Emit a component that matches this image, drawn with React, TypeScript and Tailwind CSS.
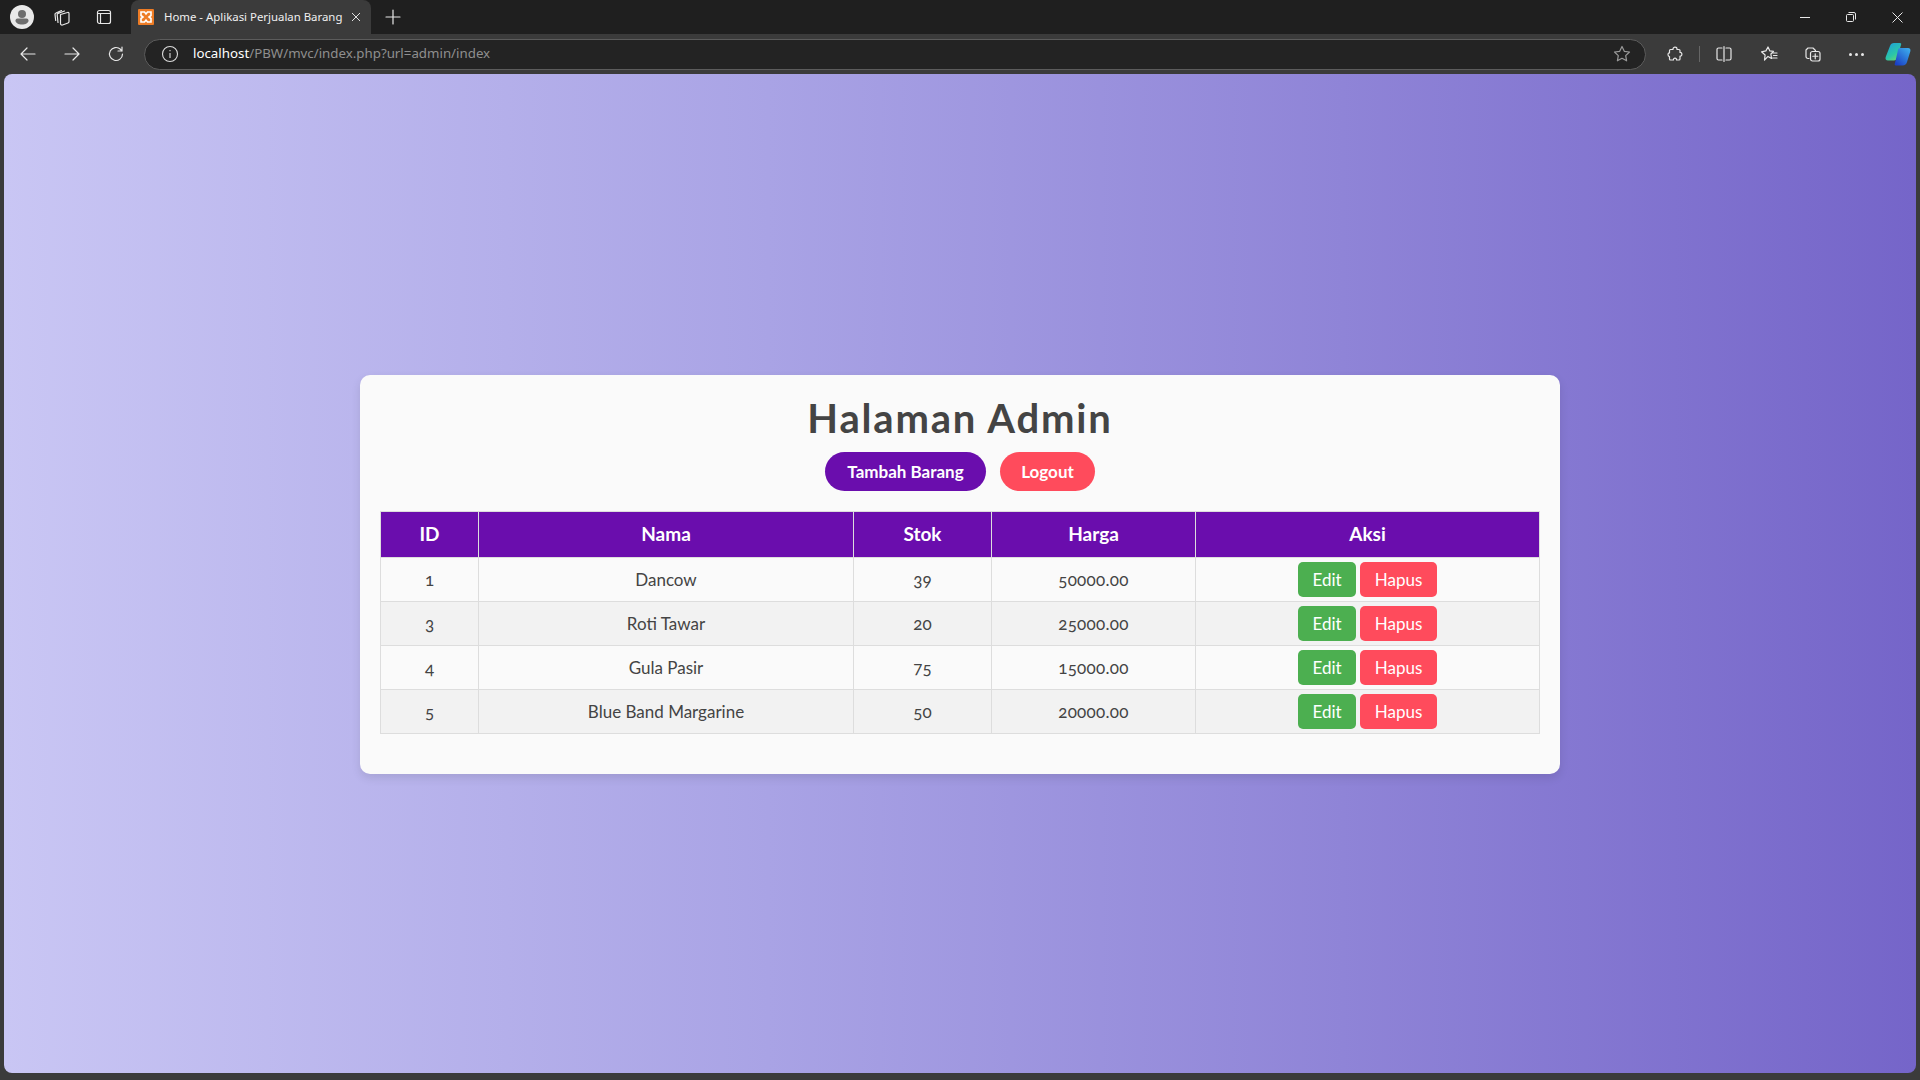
const rows = [
  { id: 1, nama: "Dancow", stok: 39, harga: "50000.00" },
  { id: 3, nama: "Roti Tawar", stok: 20, harga: "25000.00" },
  { id: 4, nama: "Gula Pasir", stok: 75, harga: "15000.00" },
  { id: 5, nama: "Blue Band Margarine", stok: 50, harga: "20000.00" },
];

function Ico({ w = 20, children }: { w?: number; children: React.ReactNode }) {
  return (
    <svg width={w} height={w} viewBox="0 0 20 20" fill="none" stroke="#e8e8e8" strokeWidth="1.2" strokeLinecap="round" strokeLinejoin="round" className="shrink-0">
      {children}
    </svg>
  );
}

function TitleBar() {
  return (
    <div className="flex h-[34px] items-start bg-[#1f1f1f] text-[#e8e8e8]">
      <div className="mt-[5px] ml-[10px] flex h-6 w-6 items-center justify-center overflow-hidden rounded-full bg-[#e9e9e9]">
        <svg width="24" height="24" viewBox="0 0 24 24">
          <circle cx="12" cy="9" r="4" fill="#6e6e6e" />
          <path d="M5.5 15.5a2 2 0 0 1 2-2h9a2 2 0 0 1 2 2c0 2.5-3 4-6.5 4s-6.500-1.500-6.500-4z" fill="#6e6e6e" />
        </svg>
      </div>
      <div className="mt-[7px] ml-[18px]">
        <Ico>
          <path d="M8.500 7.500l7-2a1 1 0 0 1 1.500 1v8a1.500 1.500 0 0 1-1 1.500l-5.500 2a1.500 1.500 0 0 1-2-1.500z" />
          <path d="M6 15.500l-.8-7.500a1.500 1.500 0 0 1 1-1.600l6.300-2.400M3.700 13.500 3 7.500a1.500 1.500 0 0 1 1-1.500l5.500-2.500" />
        </Ico>
      </div>
      <div className="mt-[7px] ml-[22px]">
        <Ico>
          <rect x="3.500" y="3.500" width="13" height="13" rx="2" />
          <path d="M3.500 6.500h13M6.500 6.500v10" />
        </Ico>
      </div>
      <div className="relative ml-[17px] flex h-[34px] w-[240px] items-center rounded-t-[8px] bg-[#3b3b3b] pl-[7px]">
        <svg width="16" height="16" viewBox="0 0 16 16" className="shrink-0">
          <rect width="16" height="16" rx="1" fill="#ee7c25" />
          <path d="M3 3h3.500l1.500 2 1.500-2H13v3.500L11 8l2 1.500V13H9.500L8 11l-1.500 2H3V9.500L5 8 3 6.500z" fill="none" stroke="#fff" strokeWidth="1.600" />
        </svg>
        <span className="ml-[10px] w-[178px] font-['Noto_Sans',sans-serif] text-[11.4px] whitespace-nowrap text-[#f0f0f0]">Home - Aplikasi Perjualan Barang</span>
        <svg width="10" height="10" viewBox="0 0 10 10" className="ml-[9px] shrink-0" stroke="#e0e0e0" strokeWidth="1">
          <path d="M1 1l8 8M9 1l-8 8" />
        </svg>
      </div>
      <div className="mt-[7px] ml-[12px]">
        <Ico>
          <path d="M10 3v14M3 10h14" />
        </Ico>
      </div>
      <div className="ml-auto flex">
        <div className="flex h-[34px] w-[46px] items-center justify-center">
          <svg width="10" height="10" viewBox="0 0 10 10" stroke="#e8e8e8"><path d="M0 5.500h10" /></svg>
        </div>
        <div className="flex h-[34px] w-[46px] items-center justify-center">
          <svg width="10" height="10" viewBox="0 0 10 10" fill="none" stroke="#e8e8e8">
            <rect x=".5" y="2.500" width="7" height="7" rx="1" />
            <path d="M2.500 .5h5.500a1.500 1.500 0 0 1 1.500 1.500v5.500" />
          </svg>
        </div>
        <div className="flex h-[34px] w-[46px] items-center justify-center">
          <svg width="11" height="11" viewBox="0 0 11 11" stroke="#e8e8e8"><path d="M.5 .5l10 10M10.500 .5l-10 10" /></svg>
        </div>
      </div>
    </div>
  );
}

function Toolbar() {
  return (
    <div className="flex h-[40px] items-center bg-[#3b3b3b]">
      <div className="ml-[18px]">
        <Ico><path d="M17 10H3M9 4l-6 6 6 6" /></Ico>
      </div>
      <div className="ml-[24px]">
        <Ico><path d="M3 10h14M11 4l6 6-6 6" /></Ico>
      </div>
      <div className="ml-[24px]">
        <Ico><path d="M16.500 10a6.500 6.500 0 1 1-2-4.700L16 7M16 3v4h-4" /></Ico>
      </div>
      <div className="ml-[18px] flex h-[31px] w-[1502px] items-center rounded-full border border-[#5c5c5c] bg-[#232323] pl-[16px]">
        <svg width="18" height="18" viewBox="0 0 18 18" fill="none" stroke="#dcdcdc" strokeWidth="1.100" className="shrink-0">
          <circle cx="9" cy="9" r="7.500" />
          <path d="M9 8v5M9 5v1.200" />
        </svg>
        <span className="ml-[14px] font-['Noto_Sans',sans-serif] text-[13.3px] whitespace-nowrap">
          <span className="text-white">localhost</span>
          <span className="text-[#8f8f8f]">/PBW/mvc/index.php?url=admin/index</span>
        </span>
        <svg width="20" height="20" viewBox="0 0 20 20" fill="none" stroke="#9a9a9a" strokeWidth="1.200" strokeLinejoin="round" className="mr-[13px] ml-auto shrink-0">
          <path d="M10 2.500l2.300 4.800 5.200.7-3.800 3.600.9 5.200-4.600-2.500-4.600 2.500.9-5.200L2.500 8l5.200-.7z" />
        </svg>
      </div>
      <div className="ml-[19px]">
        <Ico>
          <path d="M8 5C8 2.500 12 2.500 12 5v.5h2a1 1 0 0 1 1 1v2c2.500-.5 2.500 4 0 3.500v3a1 1 0 0 1-1 1h-2.500c.5-2.500-3.500-2.500-3 0h-3a1 1 0 0 1-1-1v-2.500c-2 0-2-4 0-3.500V6.500a1 1 0 0 1 1-1H8z" />
        </Ico>
      </div>
      <div className="ml-[14px] h-[16px] w-px bg-[#666]" />
      <div className="ml-[14px]">
        <Ico>
          <path d="M8 4H4.500a1.500 1.500 0 0 0-1.500 1.500v9A1.500 1.500 0 0 0 4.500 16H8M12 4h3.500A1.500 1.500 0 0 1 17 5.500v9a1.500 1.500 0 0 1-1.500 1.500H12M10 2.500v15" />
        </Ico>
      </div>
      <div className="ml-[25px]">
        <Ico>
          <path d="M9 3l1.900 3.900 3.600.5-2.600 2.600.6 4.500L9 12.400l-3.500 3.600.6-5L2.500 7.800l4.400-.9zM14 9h4M14.500 11.500H18M13.500 14H18" />
        </Ico>
      </div>
      <div className="ml-[24px]">
        <Ico>
          <path d="M6 14.500H5a2 2 0 0 1-2-2V6l2-2h5l2.500 2.500" />
          <rect x="7.500" y="7.500" width="9.500" height="9.500" rx="2" />
          <path d="M12.250 9.800v5M9.800 12.250h5" />
        </Ico>
      </div>
      <div className="ml-[23px] flex w-[20px] justify-center gap-[3px]">
        <span className="h-[3px] w-[3px] rounded-full bg-[#e8e8e8]" />
        <span className="h-[3px] w-[3px] rounded-full bg-[#e8e8e8]" />
        <span className="h-[3px] w-[3px] rounded-full bg-[#e8e8e8]" />
      </div>
      <div className="ml-[19px]">
        <svg width="26" height="24" viewBox="0 0 26 24">
          <defs>
            <linearGradient id="cp1" x1="0" y1="0" x2="0.6" y2="1">
              <stop offset="0" stopColor="#1d9be0" />
              <stop offset="0.7" stopColor="#2bc6a8" />
              <stop offset="1" stopColor="#5fd37a" />
            </linearGradient>
            <linearGradient id="cp2" x1="1" y1="0" x2="0.2" y2="1">
              <stop offset="0" stopColor="#3fb4f0" />
              <stop offset="1" stopColor="#1a3fc4" />
            </linearGradient>
          </defs>
          <path d="M9 1h6c1.200 0 1.500.8 1 2l-4 13c-.6 1.800-1.500 2.500-3 2.500H3c-2 0-3-1.500-2.300-3.500L5 4c.6-2 2-3 4-3z" fill="url(#cp1)" />
          <path d="M15 6h8c2 0 2.900 1.500 2.300 3.500L22 20c-.6 2-2 3.500-4.500 3.500H11c-1.500 0-1.600-1-1-2.500l3-13c.3-1.200 1-2 2-2z" fill="url(#cp2)" />
        </svg>
      </div>
    </div>
  );
}

export default function App() {
  const th = "border border-[#ddd] bg-[#6a0dad] px-2 py-0 h-[46px] text-center text-[19px] font-bold text-white";
  const td = "border border-[#ddd] h-[44px] p-0 text-center text-[17px] text-[#444]";

  return (
    <div className="flex h-[1080px] w-[1920px] flex-col overflow-hidden bg-[#3b3b3b] font-['Lato','Open_Sans',sans-serif]">
      <TitleBar />
      <Toolbar />
      <main className="mx-[4px] mb-[7px] flex flex-1 items-center justify-center rounded-[8px] bg-[linear-gradient(to_right,#c9c6f4,#a9a3e5_40%,#7565c9)] pt-[2px]">
        <div className="w-[1200px] rounded-[10px] bg-[#fafafa] p-5 pb-10 text-center shadow-[0_4px_10px_rgba(0,0,0,0.1)]">
          <h1 className="text-[40px] leading-[47px] font-bold tracking-[1.8px] text-[#444]">Halaman Admin</h1>
          <div className="mt-[10px] flex justify-center gap-[14px]">
            <a className="flex h-[39px] w-[161px] items-center justify-center rounded-full bg-[#6a0dad] text-[17px] font-bold text-white">Tambah Barang</a>
            <a className="flex h-[39px] w-[95px] items-center justify-center rounded-full bg-[#ff4b5c] text-[17px] font-bold text-white">Logout</a>
          </div>
          <table className="mt-[20px] w-full table-fixed border-collapse">
            <colgroup>
              <col className="w-[98px]" />
              <col className="w-[375px]" />
              <col className="w-[138px]" />
              <col className="w-[204px]" />
              <col />
            </colgroup>
            <thead>
              <tr>
                <th className={th}>ID</th>
                <th className={th}>Nama</th>
                <th className={th}>Stok</th>
                <th className={th}>Harga</th>
                <th className={th}>Aksi</th>
              </tr>
            </thead>
            <tbody>
              {rows.map((r) => (
                <tr key={r.id} className="even:bg-[#f2f2f2]">
                  <td className={td + " oldstyle-nums"}>{r.id}</td>
                  <td className={td}>{r.nama}</td>
                  <td className={td + " oldstyle-nums"}>{r.stok}</td>
                  <td className={td + " oldstyle-nums tracking-[0.3px]"}>{r.harga}</td>
                  <td className={td}>
                    <div className="flex justify-center gap-[4px]">
                      <a className="flex h-[35px] w-[58px] items-center justify-center rounded-[5px] bg-[#4caf50] text-white">Edit</a>
                      <a className="flex h-[35px] w-[77px] items-center justify-center rounded-[5px] bg-[#ff4b5c] text-white">Hapus</a>
                    </div>
                  </td>
                </tr>
              ))}
            </tbody>
          </table>
        </div>
      </main>
    </div>
  );
}
